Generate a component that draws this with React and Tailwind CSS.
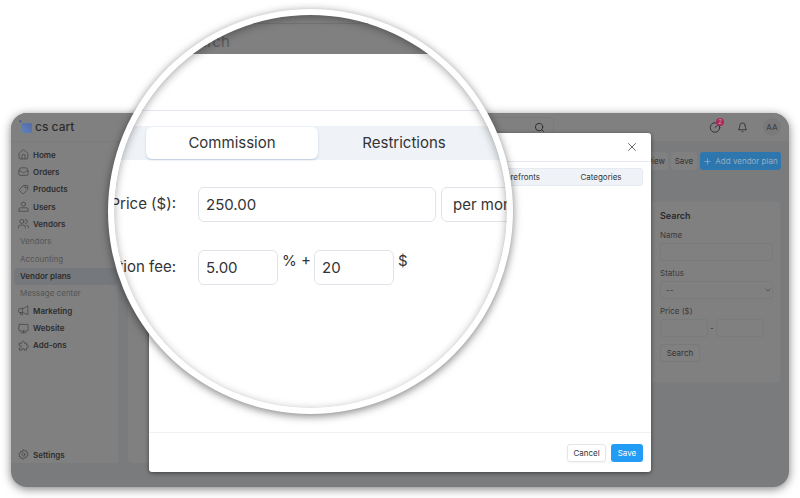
import { FiBell, FiSearch } from "react-icons/fi";
import { LuPlus, LuX, LuChevronDown } from "react-icons/lu";

const Icon = ({ children }) => (
  <svg
    viewBox="0 0 24 24"
    className="w-[11px] h-[11px] shrink-0"
    fill="none"
    stroke="currentColor"
    strokeWidth="1.7"
    strokeLinecap="round"
    strokeLinejoin="round"
  >
    {children}
  </svg>
);

const icons = {
  home: (
    <Icon>
      <path d="M2.500 9.500 10.500 2.300a2.200 2.200 0 0 1 3 0l8 7.200V19a2.500 2.500 0 0 1-2.500 2.500H5A2.500 2.500 0 0 1 2.500 19z" />
      <path d="M8.500 21.500V15a3.500 3.500 0 0 1 7 0v6.500" />
    </Icon>
  ),
  orders: (
    <Icon>
      <path d="M2 11 4 6A3 3 0 0 1 6.800 4h10.400A3 3 0 0 1 20 6l2 5v7a2.500 2.500 0 0 1-2.500 2.500h-15A2.500 2.500 0 0 1 2 18z" />
      <path d="M2 11h4.500c1.500 0 2 4 5.500 4s4-4 5.500-4H22" />
    </Icon>
  ),
  products: (
    <Icon>
      <path d="M13 3.500 20 3a1.500 1.500 0 0 1 1.500 1.500L21 11.500a2 2 0 0 1-.6 1.300l-7.900 7.900a2 2 0 0 1-2.800 0l-6.400-6.400a2 2 0 0 1 0-2.800l8.300-7.400a2 2 0 0 1 1.400-.6z" />
      <circle cx="16.500" cy="7.800" r="1.300" />
    </Icon>
  ),
  users: (
    <Icon>
      <circle cx="12" cy="7" r="4.500" />
      <path d="M2 21.500v-3.200a3.500 3.500 0 0 1 3.500-3.500h13a3.500 3.500 0 0 1 3.500 3.500v3.200z" />
    </Icon>
  ),
  vendors: (
    <Icon>
      <circle cx="8.500" cy="7.500" r="4.500" />
      <path d="M1 21.500v-1.500A4.500 4.500 0 0 1 5.500 15.500h6A4.500 4.500 0 0 1 16 20v1.500" />
      <path d="M16 3a4.500 4.500 0 0 1 0 9M19 15.500a4.500 4.500 0 0 1 4 4.500v1.500" />
    </Icon>
  ),
  marketing: (
    <Icon>
      <path d="M21.500 3v18L10 16.500H4A2.500 2.500 0 0 1 1.500 14v-4A2.500 2.500 0 0 1 4 7.500h6z" />
      <path d="M10 7.500v9M5 16.500 6 21h4l-1-4.500" />
    </Icon>
  ),
  website: (
    <Icon>
      <rect x="2" y="3" width="20" height="14.500" rx="2" />
      <path d="M12 17.500V21M7 21.500h10" />
    </Icon>
  ),
  addons: (
    <Icon>
      <path d="M3 7h5.500a3 3 0 1 1 5.500 0h4.500v4.500a3 3 0 1 1 0 5.500v5H14a2.800 2.800 0 1 0-5.500 0H3V17a3 3 0 1 0 0-5.500z" />
    </Icon>
  ),
  settings: (
    <Icon>
      <path d="m12 1.500 2.300 2.600 3.400-.7.8 3.300 3.300 1.200-1 3.300 1 3.300-3.300 1.200-.8 3.300-3.400-.7L12 22.500l-2.300-2.600-3.400.7-.8-3.300-3.300-1.200 1-3.300-1-3.300 3.300-1.200.8-3.300 3.400.7z" />
      <circle cx="12" cy="12" r="3.500" />
    </Icon>
  ),
};

const menu = [
  { label: "Home", icon: "home" },
  { label: "Orders", icon: "orders" },
  { label: "Products", icon: "products" },
  { label: "Users", icon: "users" },
  { label: "Vendors", icon: "vendors" },
  { label: "Vendors", sub: true },
  { label: "Accounting", sub: true },
  { label: "Vendor plans", sub: true, active: true },
  { label: "Message center", sub: true },
  { label: "Marketing", icon: "marketing" },
  { label: "Website", icon: "website" },
  { label: "Add-ons", icon: "addons" },
];

function MenuItem({ item }) {
  if (item.sub) {
    return (
      <a
        href="#"
        className={
          item.active
            ? "flex items-center h-[17px] ml-[3px] pl-[6px] rounded bg-[#75787c] font-semibold text-[#2d2d2e]"
            : "flex items-center h-[17px] pl-[9px] text-[#555556]"
        }
      >
        {item.label}
      </a>
    );
  }
  return (
    <a
      href="#"
      className="flex items-center gap-1 h-[17px] pl-[7px] font-semibold text-[#2d2d2e]"
    >
      <span className="text-[#474747]">{icons[item.icon]}</span>
      {item.label}
    </a>
  );
}

function Header() {
  return (
    <header className="flex items-center h-[29px] pl-2 pr-2 bg-[#808080] border-b border-[#7a7b7d]">
      <a href="#" className="flex items-center gap-[2px] text-[#2c2c2e]">
        <svg viewBox="0 0 14 14" className="w-[14px] h-[14px]">
          <defs>
            <linearGradient id="logo" x1="0" y1="1" x2="1" y2="0">
              <stop offset="0" stopColor="#5f86bd" />
              <stop offset="1" stopColor="#5468a6" />
            </linearGradient>
          </defs>
          <rect x="2.500" y="3" width="10.500" height="10" rx="1.500" fill="url(#logo)" />
          <circle cx="1.300" cy="1.300" r="1.200" fill="#4c5f97" />
        </svg>
        <span className="text-[12px] leading-4 font-medium">cs cart</span>
      </a>
      <div className="flex-1" />
      <div className="flex items-center justify-end w-[300px] h-5 mr-[155px] pr-2 border border-[#7a7a7b] rounded">
        <FiSearch className="w-[11px] h-[11px] text-[#2b2b2c]" />
      </div>
      <div className="flex items-center text-[#333]">
        <button className="relative mr-4" aria-label="Notifications">
          <svg
            viewBox="0 0 24 24"
            className="w-[12px] h-[12px]"
            fill="none"
            stroke="currentColor"
            strokeWidth="2"
            strokeLinecap="round"
          >
            <circle cx="12" cy="13" r="9.500" />
            <path d="M12 13 17 9" />
          </svg>
          <span className="absolute -top-[3px] -right-[3px] flex items-center justify-center w-2 h-2 rounded-full bg-[#a92c58] text-[6px] leading-none text-[#c9a0af]">
            2
          </span>
        </button>
        <button className="mr-[15px]" aria-label="Alerts">
          <FiBell className="w-[11px] h-[11px]" />
        </button>
        <span className="flex items-center justify-center w-[18px] h-[18px] rounded-full bg-[#7a7a7c] font-medium text-[#444]">
          AA
        </span>
      </div>
    </header>
  );
}

function SearchPanel() {
  return (
    <form className="w-[132px] h-[182px] pl-[10px] pr-[7px] pt-2 rounded bg-[#808080] border border-[#7c7d7f] text-[#39393a]">
      <h2 className="text-[9px] leading-3 font-semibold text-[#2a2a2b]">Search</h2>
      <label htmlFor="name" className="block mt-2 leading-[10px]">
        Name
      </label>
      <input
        id="name"
        className="block w-full h-[18px] mt-[3px] px-1 rounded-[3px] border border-[#797a7c]"
      />
      <label htmlFor="status" className="block mt-[7px] leading-[10px]">
        Status
      </label>
      <div className="relative mt-[3px]">
        <select
          id="status"
          className="block w-full h-[18px] px-[5px] rounded-[3px] border border-[#797a7c] appearance-none"
        >
          <option>--</option>
        </select>
        <LuChevronDown className="absolute right-[1px] top-[5px] w-2 h-2 pointer-events-none" />
      </div>
      <label htmlFor="price-from" className="block mt-[7px] leading-[10px]">
        Price ($)
      </label>
      <div className="flex items-center gap-[2px] mt-[3px]">
        <input
          id="price-from"
          className="w-12 h-[18px] px-1 rounded-[3px] border border-[#797a7c]"
        />
        <span>-</span>
        <input
          aria-label="Price to"
          className="w-12 h-[18px] px-1 rounded-[3px] border border-[#797a7c]"
        />
      </div>
      <button
        type="button"
        className="w-10 h-[18px] mt-[7px] rounded-[3px] border border-[#78797a] text-[#333]"
      >
        Search
      </button>
    </form>
  );
}

function Magnifier() {
  return (
    <div className="absolute -left-[41px] -top-[124px] w-[405px] h-[405px] p-[6px] rounded-full bg-white shadow-[0_2px_9px_rgba(0,0,0,0.5)]">
      <div className="relative w-full h-full rounded-full overflow-hidden bg-white text-[15px] leading-5 text-[#333436]">
        <div className="h-[39px] pt-2 bg-[#808080] overflow-hidden">
          <input
            aria-label="Search"
            placeholder="Search"
            className="w-full h-[36px] pl-[65px] border border-[#747476] placeholder:text-[#5b5b5c]"
          />
        </div>
        <div className="h-[57px] border-b border-[#e3e7ee]" />
        <div className="flex h-[34px] mt-[15px] pl-8 py-px bg-[#eff3f8]">
          <button className="w-[172px] h-full rounded-md bg-white shadow-[0_1px_2px_rgba(120,145,185,0.45)]">
            Commission
          </button>
          <button className="w-[172px] h-full">Restrictions</button>
        </div>
        <div className="flex mt-[27px]">
          <label
            htmlFor="plan-price"
            className="flex justify-end w-[62px] mr-[22px] pt-[7px] whitespace-nowrap"
          >
            Price ($):
          </label>
          <input
            id="plan-price"
            defaultValue="250.00"
            className="w-[238px] h-[35px] px-[7px] rounded-md border border-[#dfe3ea] shrink-0"
          />
          <select
            aria-label="Period"
            className="w-[140px] h-[35px] ml-[5px] px-[11px] rounded-md border border-[#dfe3ea] appearance-none shrink-0"
          >
            <option>per month</option>
          </select>
        </div>
        <div className="flex mt-7">
          <label
            htmlFor="fee-percent"
            className="flex justify-end w-[62px] mr-[22px] pt-[7px] whitespace-nowrap overflow-hidden"
          >
            Transaction fee:
          </label>
          <input
            id="fee-percent"
            defaultValue="5.00"
            className="w-20 h-[35px] px-[7px] rounded-md border border-[#dfe3ea]"
          />
          <span className="w-9 pt-px pl-1 whitespace-nowrap">% +</span>
          <input
            aria-label="Fixed fee"
            defaultValue="20"
            className="w-20 h-[35px] px-[7px] rounded-md border border-[#dfe3ea]"
          />
          <span className="pt-px pl-1">$</span>
        </div>
        <div className="absolute inset-0 rounded-full pointer-events-none shadow-[inset_0_2px_8px_rgba(0,0,0,0.35)]" />
      </div>
    </div>
  );
}

function Modal() {
  return (
    <div
      role="dialog"
      className="relative w-full max-w-[502px] rounded-[3px] bg-white shadow-[0_1px_4px_rgba(0,0,0,0.5)]"
    >
      <div className="flex items-center justify-end h-[29px] pr-3 border-b border-[#e6eaf0]">
        <button aria-label="Close">
          <LuX className="w-[14px] h-[14px] text-[#555]" strokeWidth="1.5" />
        </button>
      </div>
      <div className="h-[270px] px-2 pt-[6px]">
        <div className="flex justify-end h-[18px] rounded-[3px] border border-[#e6ebf1] bg-[#eff3f8] text-[#333436]">
          <button className="w-[82px]">Storefronts</button>
          <button className="w-[82px]">Categories</button>
        </div>
      </div>
      <div className="flex justify-end gap-[5px] h-10 px-2 pt-[11px] border-t border-[#f0f1f3]">
        <button className="w-[39px] h-[18px] rounded-[3px] border border-[#e3e5e9] shadow-xs text-[#333436]">
          Cancel
        </button>
        <button className="w-8 h-[18px] rounded-[3px] bg-[#229cf5] text-white">
          Save
        </button>
      </div>
      <Magnifier />
    </div>
  );
}

export default function App() {
  return (
    <div className="min-h-screen bg-white px-[11px] pt-[113px] pb-[11px] overflow-hidden font-[Inter,sans-serif] text-[8px] leading-3">
      <div className="relative">
        <div className="rounded-[16px] overflow-hidden bg-[#797b7d] pb-6 shadow-[0_2px_10px_rgba(0,0,0,0.5)]">
          <Header />
          <div className="flex">
            <nav className="flex flex-col w-[107px] h-[321px] pt-1 bg-[#808080] shrink-0">
              <div className="flex flex-col justify-between h-[208px]">
                {menu.map((item, i) => (
                  <MenuItem key={i} item={item} />
                ))}
              </div>
              <div className="flex flex-col justify-end flex-1">
                <MenuItem item={{ label: "Settings", icon: "settings" }} />
              </div>
            </nav>
            <main className="flex-1 pl-[10px] pr-2 pt-[10px]">
              <div className="flex justify-end gap-[3px] text-[#333]">
                <button className="w-9 h-[18px] rounded-[3px] bg-[#808080]">
                  Preview
                </button>
                <button className="w-[26px] h-[18px] rounded-[3px] bg-[#808080]">
                  Save
                </button>
                <button className="flex items-center justify-center gap-[3px] w-[81px] h-[18px] rounded-[3px] bg-[#2d76ae] text-[#93aec3]">
                  <LuPlus className="w-[9px] h-[9px]" />
                  Add vendor plan
                </button>
              </div>
              <div className="flex items-start gap-2 mt-[31px]">
                <section className="flex-1 h-[262px] rounded bg-[#808080]" />
                <SearchPanel />
              </div>
            </main>
          </div>
        </div>
        <div className="absolute inset-x-0 top-5 flex justify-center">
          <Modal />
        </div>
      </div>
    </div>
  );
}
